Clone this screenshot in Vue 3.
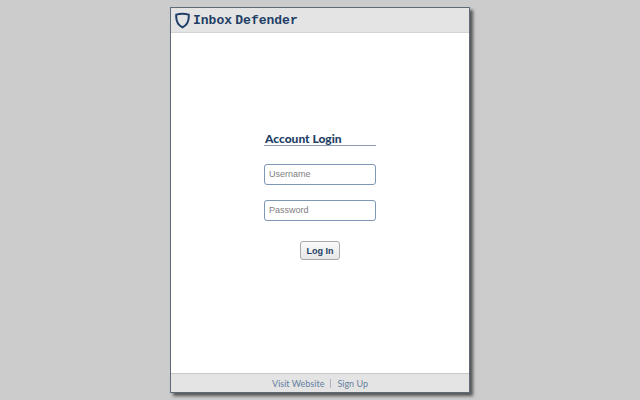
<script setup>
const links = ['Visit Website', 'Sign Up']
</script>

<template>
  <div class="page">
    <div class="frame">
      <header class="top">
        <svg class="shield" width="15" height="17" viewBox="0 0 15 17">
          <path d="M1.3 2.6 C5 1.6 10 1.6 13.7 2.6 C14.2 8 12.2 13 7.5 15.4 C2.8 13 0.8 8 1.3 2.6 Z" fill="none" stroke="#1f3f66" stroke-width="2" />
        </svg>
        <span class="brand">Inbox Defender</span>
      </header>
      <main class="body">
        <form class="login" @submit.prevent>
          <h1>Account Login</h1>
          <input type="text" placeholder="Username" />
          <input type="password" placeholder="Password" />
          <button type="submit">Log In</button>
        </form>
      </main>
      <footer class="bottom">
        <a>{{ links[0] }}</a>
        <span class="sep"></span>
        <a>{{ links[1] }}</a>
      </footer>
    </div>
  </div>
</template>

<style>
html, body {
  margin: 0;
  background: #cccccc;
}
</style>

<style scoped>
.page {
  height: 400px;
  display: flex;
  justify-content: center;
  padding-top: 7px;
  box-sizing: border-box;
}
.frame {
  width: 300px;
  height: 386px;
  box-sizing: border-box;
  border: 1px solid #5f6b78;
  background: #fff;
  box-shadow: 3px 3px 3px #555;
  display: flex;
  flex-direction: column;
}
.top {
  height: 25px;
  box-sizing: border-box;
  background: #e4e4e4;
  border-bottom: 1px solid #d4d4d4;
  display: flex;
  align-items: center;
  padding-left: 4px;
  gap: 3px;
}
.shield {
  flex: none;
}
.brand {
  font-family: "Liberation Mono", monospace;
  font-weight: bold;
  font-size: 13px;
  color: #1f3f66;
  word-spacing: -4.5px;
}
.body {
  flex: 1;
  display: flex;
  justify-content: center;
}
.login {
  width: 112px;
  padding-top: 99px;
  display: flex;
  flex-direction: column;
}
h1 {
  margin: 0;
  padding-left: 1px;
  font-family: "Lato", sans-serif;
  font-weight: 900;
  font-size: 12px;
  line-height: 13px;
  color: #1f3f66;
  border-bottom: 1px solid #8c9db3;
}
input {
  box-sizing: border-box;
  width: 112px;
  height: 21px;
  margin-top: 18px;
  padding: 0 4px 1px;
  border: 1px solid #7d97b5;
  border-radius: 3px;
  background: #fff;
  font-family: "Liberation Sans", sans-serif;
  font-size: 9px;
  outline: none;
}
input + input {
  margin-top: 15px;
}
input::placeholder {
  color: #808080;
  opacity: 1;
}
button {
  align-self: center;
  margin-top: 20px;
  width: 40px;
  height: 19px;
  padding: 0;
  border: 1px solid #a9a9a9;
  border-radius: 3px;
  background: linear-gradient(#fafafa, #e6e6e6);
  font-family: "Liberation Sans", sans-serif;
  font-weight: bold;
  font-size: 9px;
  color: #1f3f66;
}
.bottom {
  height: 19px;
  box-sizing: border-box;
  background: #e4e4e4;
  border-top: 1px solid #c8c8c8;
  display: flex;
  justify-content: center;
  align-items: center;
  gap: 6px;
  font-family: "Lato", sans-serif;
  font-size: 9px;
  color: #647f9e;
}
.sep {
  width: 1px;
  height: 9px;
  background: #a9b5c4;
}
</style>
